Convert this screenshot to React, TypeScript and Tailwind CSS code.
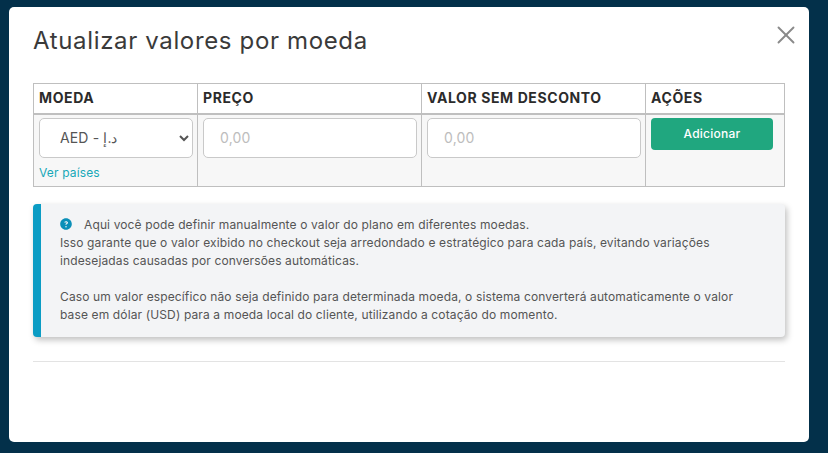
import React from 'react';
import { X } from 'lucide-react';

const font = "font-['Inter','Noto_Sans',sans-serif]";

const PriceInput: React.FC = () => (
  <input
    type="text"
    placeholder="0,00"
    className="block w-[214px] h-10 bg-white border border-[#c9c9c9] rounded-[5px] px-4 text-[14px] text-[#555] placeholder-[#bdbdbd] tracking-[0.2px]"
  />
);

const Th: React.FC<{ children: React.ReactNode; className: string }> = ({ children, className }) => (
  <th className={`h-[30px] border border-[#bfbfbf] border-b-2 px-[5px] text-left text-[14px] leading-[20px] font-bold text-[#2b2b2b] tracking-[0.6px] ${className}`}>
    {children}
  </th>
);

export default function App() {
  return (
    <div className={`h-[453px] w-[828px] overflow-hidden bg-[#03304a] pt-[7px] pl-[9px] ${font}`}>
      <div className="relative h-[435px] w-[800px] rounded-[5px] bg-white px-6 pt-[18px]">
        <h1 className="text-[24px] leading-[32px] font-normal text-[#3a3a3a] tracking-[0.65px]">Atualizar valores por moeda</h1>
        <button className="absolute right-[8px] top-[13px] text-[#8a8a8a]">
          <X size={30} strokeWidth={1.5} />
        </button>

        <table className="mt-[26px] w-[751px] table-fixed border-collapse">
          <thead>
            <tr>
              <Th className="w-[164px]">MOEDA</Th>
              <Th className="w-[224px]">PREÇO</Th>
              <Th className="w-[224px]">VALOR SEM DESCONTO</Th>
              <Th className="w-[139px]">AÇÕES</Th>
            </tr>
          </thead>
          <tbody>
            <tr className="h-[73px] bg-[#f7f7f7]">
              <td className="border border-[#bfbfbf] px-[5px] pt-[3px] pb-[5px] align-top">
                <select className="block h-10 w-[154px] rounded-[5px] border border-[#c9c9c9] bg-white pl-[16px] text-[14px] text-[#555] tracking-[0.15px]">
                  <option>AED - د.إ</option>
                </select>
                <a className="mt-[7px] block text-[12px] leading-[16px] text-[#17a8b8] tracking-[0.15px]">Ver países</a>
              </td>
              <td className="border border-[#bfbfbf] px-[5px] pt-[3px] align-top">
                <PriceInput />
              </td>
              <td className="border border-[#bfbfbf] px-[5px] pt-[3px] align-top">
                <PriceInput />
              </td>
              <td className="border border-[#bfbfbf] px-[5px] pt-[3px] align-top">
                <button className="h-8 w-[122px] rounded-[4px] bg-[#20a77f] text-[12px] font-medium text-white tracking-[0.25px]">Adicionar</button>
              </td>
            </tr>
          </tbody>
        </table>

        <div className="mt-[17px] h-[133px] w-[752px] rounded-[4px] border-l-[8px] border-[#0b9cc4] bg-[#f3f4f6] pl-[19px] pt-[12px] text-[12px] leading-[18px] text-[#555] tracking-[0.13px] shadow-[2px_3px_6px_rgba(0,0,0,0.25)] whitespace-nowrap">
          <p>
            <svg viewBox="0 0 512 512" className="mr-[12px] inline-block h-3 w-3 align-[-1px]">
              <path
                fill="#0b8fb8"
                d="M256 8C119 8 8 119 8 256s111 248 248 248 248-111 248-248S393 8 256 8zm0 392a32 32 0 1 1 0-64 32 32 0 0 1 0 64zm43-147c-14 9-19 15-19 27v6h-48v-8c0-28 16-41 33-52 14-9 23-15 23-27 0-13-13-23-30-23-19 0-31 10-41 25l-38-24c17-28 42-43 80-43 42 0 83 26 83 66 0 30-20 44-43 53z"
              />
            </svg>
            Aqui você pode definir manualmente o valor do plano em diferentes moedas.
          </p>
          <p>
            Isso garante que o valor exibido no checkout seja arredondado e estratégico para cada país, evitando variações
            <br />
            indesejadas causadas por conversões automáticas.
          </p>
          <p className="mt-[18px]">
            Caso um valor específico não seja definido para determinada moeda, o sistema converterá automaticamente o valor
            <br />
            base em dólar (USD) para a moeda local do cliente, utilizando a cotação do momento.
          </p>
        </div>

        <hr className="mt-6 w-[752px] border-t border-[#e3e3e3]" />
      </div>
    </div>
  );
}
